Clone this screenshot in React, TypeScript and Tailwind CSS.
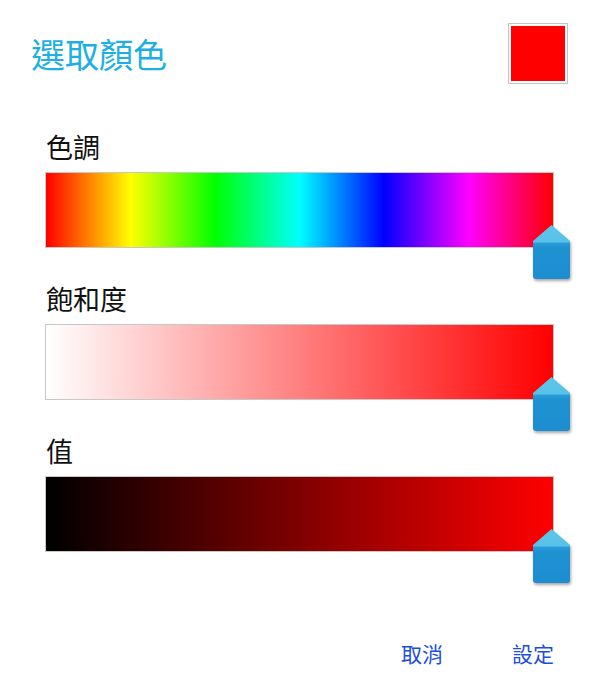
import React from "react";

const font = { fontFamily: '"Noto Sans CJK TC", "Noto Sans", sans-serif' };

function Thumb() {
  return (
    <svg
      width="40"
      height="58"
      viewBox="0 0 40 58"
      className="absolute -right-[19px] top-[51px] drop-shadow-[1px_2px_1.5px_rgba(0,0,0,0.35)]"
    >
      <defs>
        <linearGradient id="tg" x1="0" y1="0" x2="0" y2="1">
          <stop offset="0" stopColor="#5cc7ea" />
          <stop offset="0.31" stopColor="#57c2e7" />
          <stop offset="0.34" stopColor="#2a9bd8" />
          <stop offset="0.42" stopColor="#1f92d2" />
          <stop offset="1" stopColor="#1c8ecf" />
        </linearGradient>
      </defs>
      <path
        d="M19.5 1 L38 17 L38 52 Q38 55 35 55 L4 55 Q1 55 1 52 L1 17 Z"
        fill="url(#tg)"
      />
    </svg>
  );
}

function Slider({ label, gradient }: { label: string; gradient: string }) {
  return (
    <div className="flex flex-col">
      <div className="pl-px text-[27px] leading-[24px] text-[#111]" style={font}>
        {label}
      </div>
      <div className="relative mt-[13px] h-[76px] w-[509px] border border-[#c8c8c8]">
        <div className={`h-full w-full ${gradient}`} />
        <Thumb />
      </div>
    </div>
  );
}

export default function App() {
  return (
    <div className="flex h-[697px] w-[600px] flex-col bg-white" style={font}>
      <div className="flex items-center justify-between pl-[31px] pr-[32px] pt-[23px]">
        <h1 className="text-[34px] leading-[40px] font-normal text-[#1eafe3]">選取顏色</h1>
        <div className="h-[61px] w-[60px] border border-[#c4c4c4] bg-white p-[2px]">
          <div className="h-full w-full bg-[#ff0000]" />
        </div>
      </div>
      <div className="mt-[51px] flex flex-col gap-[39px] pl-[45px]">
        <Slider
          label="色調"
          gradient="bg-[linear-gradient(to_right,#ff0000,#ffff00,#00ff00,#00ffff,#0000ff,#ff00ff,#ff0000)]"
        />
        <Slider
          label="飽和度"
          gradient="bg-[linear-gradient(to_right,#ffffff,#ff0000)]"
        />
        <Slider
          label="值"
          gradient="bg-[linear-gradient(to_right,#000000,#ff0000)]"
        />
      </div>
      <div className="mt-auto mb-[32px] flex justify-end gap-[69px] pr-[46px] text-[21px] leading-[24px] text-[#1d4fd6]">
        <button type="button">取消</button>
        <button type="button">設定</button>
      </div>
    </div>
  );
}
